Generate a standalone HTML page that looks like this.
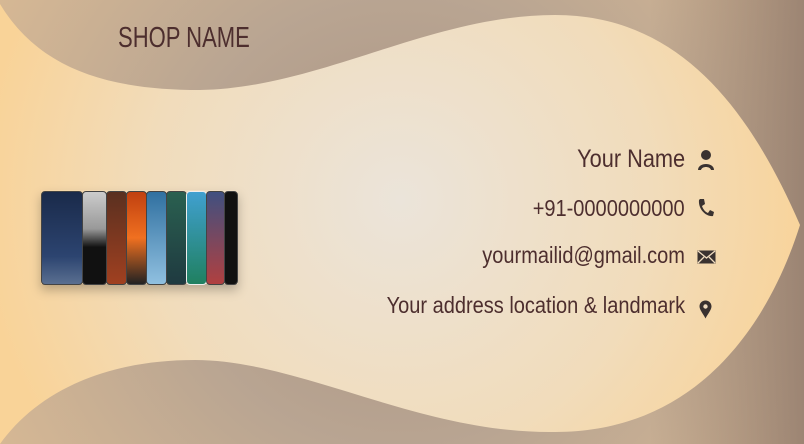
<!DOCTYPE html>
<html><head><style>
html,body{margin:0;padding:0;width:804px;height:444px;overflow:hidden}
body{position:relative;font-family:"Liberation Sans",sans-serif;color:#4d2e2e}
svg.bg{position:absolute;left:0;top:0}
.t{position:absolute;right:119px;white-space:nowrap;transform:scaleX(0.87);transform-origin:right center;font-size:23px}
.ic{position:absolute;left:697px}
.shop{position:absolute;left:118px;top:22px;font-size:29px;transform:scaleX(0.76);transform-origin:left center;white-space:nowrap}
.phones{position:absolute;left:41px;top:190px;width:197px;height:94px;box-shadow:0 6px 10px rgba(0,0,0,.25)}
.p{position:absolute;top:1px;height:92px;border-radius:4px;background:#1b1d22;border:1px solid #444}
</style></head><body>
<svg class="bg" width="804" height="444">
<defs>
<radialGradient id="c" cx="400" cy="200" r="420" gradientUnits="userSpaceOnUse">
<stop offset="0" stop-color="#ebe4da"/><stop offset="0.6" stop-color="#f1dcbb"/><stop offset="1" stop-color="#f9d398"/></radialGradient>
<radialGradient id="b" cx="400" cy="222" r="460" gradientUnits="userSpaceOnUse">
<stop offset="0" stop-color="#a89282"/><stop offset="0.5" stop-color="#b9a592"/><stop offset="1" stop-color="#d6b894"/></radialGradient>
<linearGradient id="r" x1="650" y1="0" x2="804" y2="0" gradientUnits="userSpaceOnUse"><stop offset="0" stop-color="#8e786b" stop-opacity="0"/><stop offset="1" stop-color="#8e786b" stop-opacity="0.8"/></linearGradient>
</defs>
<rect width="804" height="444" fill="url(#b)"/>
<rect width="804" height="444" fill="url(#r)"/>
<path d="M0,4 C40,70 110,90 200,90 C320,88 430,15 555,15 C680,15 750,110 800,225 C770,320 700,432 555,432 C420,434 300,360 195,360 C100,360 35,395 0,444 Z" fill="url(#c)"/>
</svg>
<div class="shop">SHOP NAME</div>
<div class="phones">
<div class="p" style="left:0;width:40px;background:linear-gradient(#1a2a4a,#2c4470 70%,#5a6f90)"></div>
<div class="p" style="left:41px;width:23px;background:linear-gradient(#ccc,#999 40%,#111 60%)"></div>
<div class="p" style="left:65px;width:19px;background:linear-gradient(#5a3020,#a04020)"></div>
<div class="p" style="left:85px;width:19px;background:linear-gradient(#c04010,#f07020 50%,#222)"></div>
<div class="p" style="left:105px;width:19px;background:linear-gradient(#3070a0,#90c0e0)"></div>
<div class="p" style="left:125px;width:19px;background:linear-gradient(#2a6050,#1f3a40)"></div>
<div class="p" style="left:145px;width:19px;background:linear-gradient(#40a0d0,#208060);border-color:#eee"></div>
<div class="p" style="left:165px;width:17px;background:linear-gradient(#405080,#b04040)"></div>
<div class="p" style="left:183px;width:12px;background:#111"></div>
</div>
<div class="t" style="top:145px;font-size:25px">Your Name</div>
<div class="t" style="top:195px">+91-0000000000</div>
<div class="t" style="top:242px">yourmailid@gmail.com</div>
<div class="t" style="top:292px">Your address location &amp; landmark</div>
<svg class="ic" style="top:149px" width="18" height="22" viewBox="0 0 18 22"><circle cx="9" cy="6" r="5" fill="#3a3230"/><path d="M1,21 C1,13 17,13 17,21 L14,21 C13,17 5,17 4,21 Z" fill="#3a3230"/></svg>
<svg class="ic" style="top:198px" width="18" height="20" viewBox="0 0 18 20"><path d="M3,1 L7,1 L8,6 L5,8 C6,11 8,14 11,15 L13,12 L17,14 L16,18 C9,19 1,11 2,2 Z" fill="#3a3230"/></svg>
<svg class="ic" style="top:250px" width="19" height="14" viewBox="0 0 19 14"><rect x="0.5" y="0.5" width="18" height="13" fill="#3a3230"/><path d="M1,1 L9.5,8 L18,1 M1,13 L7,7 M18,13 L12,7" stroke="#f0dcc0" stroke-width="1.3" fill="none"/></svg>
<svg class="ic" style="top:300px;left:699px" width="13" height="19" viewBox="0 0 13 19"><path d="M6.5,0.5 C10,0.5 12.5,3 12.5,6.5 C12.5,10 8,15 6.5,18.5 C5,15 0.5,10 0.5,6.5 C0.5,3 3,0.5 6.5,0.5 Z" fill="#3a3230"/><circle cx="6.5" cy="6.5" r="2.2" fill="#f0dcc0"/></svg>
</body></html>
